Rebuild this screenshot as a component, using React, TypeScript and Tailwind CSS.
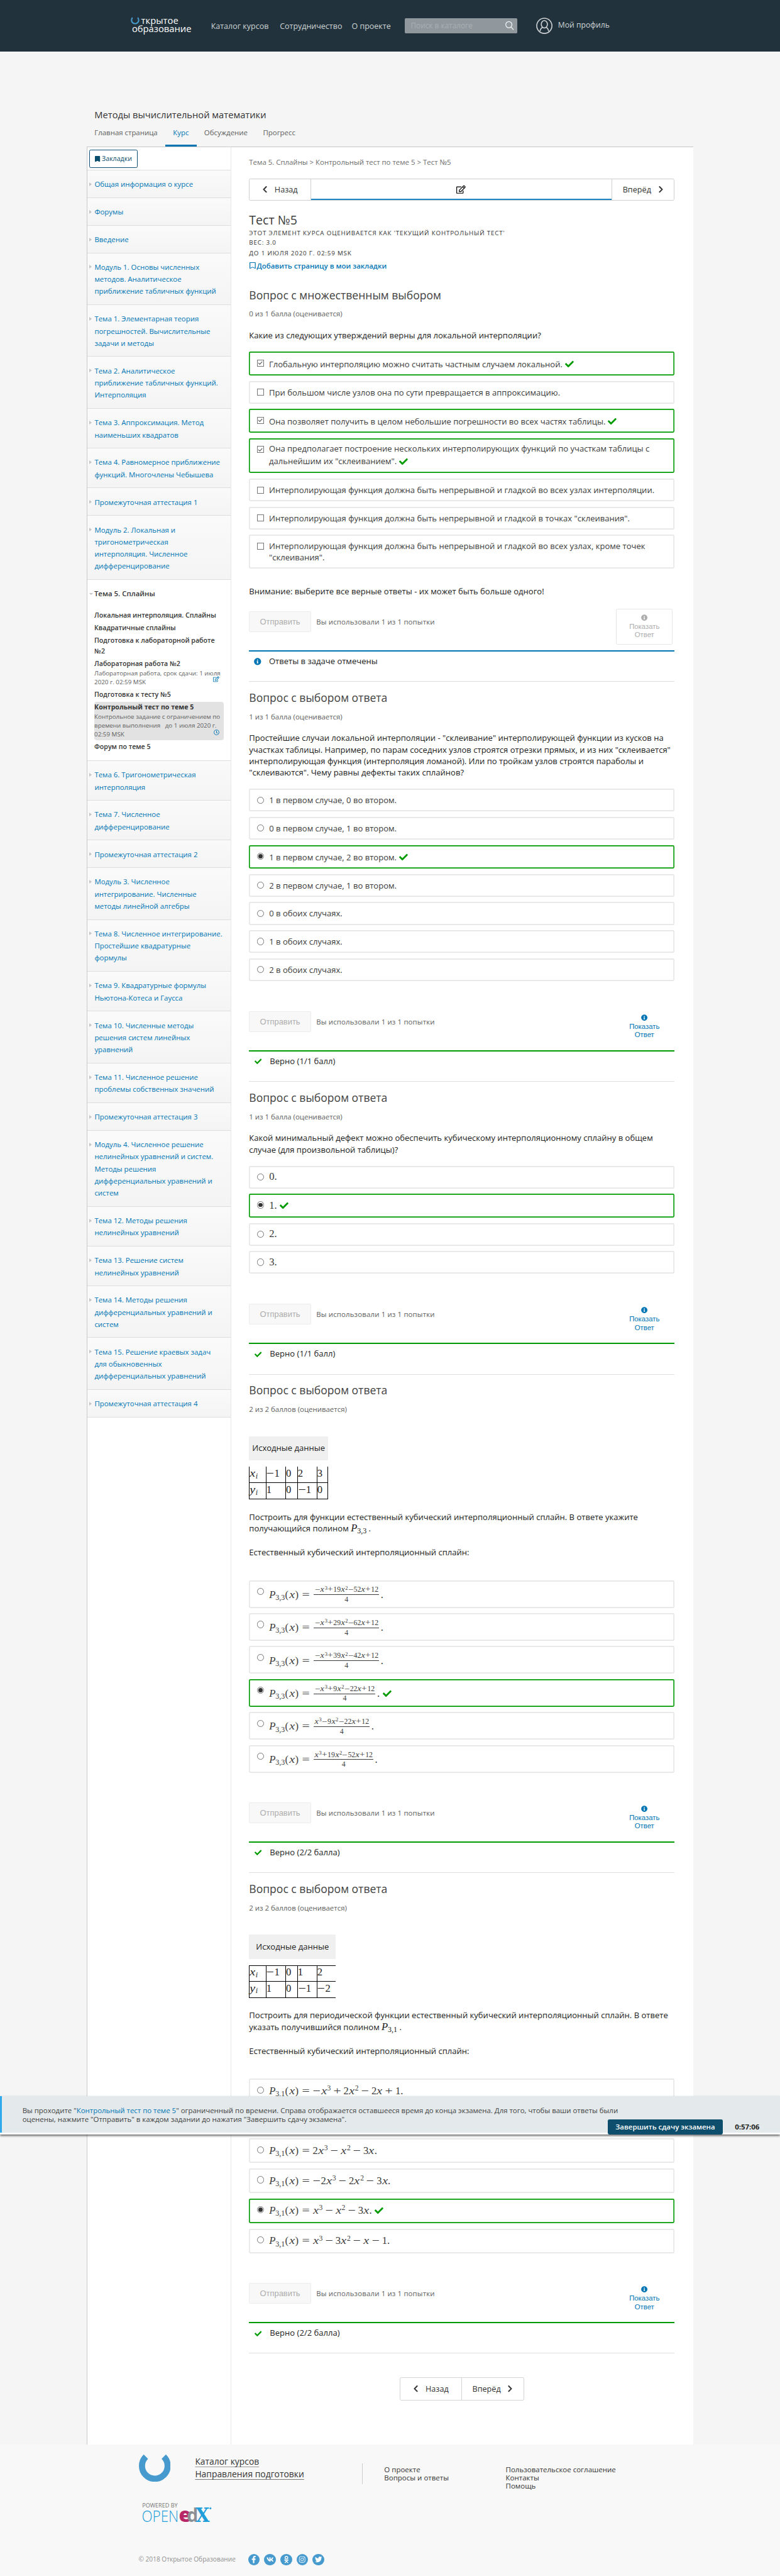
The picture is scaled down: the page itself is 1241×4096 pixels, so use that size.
import type { ReactNode } from "react";
import {
  FaBookmark,
  FaCheck,
  FaChevronLeft,
  FaChevronRight,
  FaFacebookF,
  FaInfoCircle,
  FaInstagram,
  FaOdnoklassniki,
  FaRegBookmark,
  FaRegClock,
  FaRegEdit,
  FaTwitter,
  FaVk,
} from "react-icons/fa";

/* ---------- formulas ---------- */

// Tokens: "^2" superscript, "_3,1" subscript (up to the next "("), operators get a wide box.
function Formula({ src }: { src: string }) {
  const out: ReactNode[] = [];
  const tokens = src.match(/\^\d|_[\d,i]+|[A-Za-z]|\d+|[−+=]|[().]/g) ?? [];
  tokens.forEach((t, i) => {
    const prev = tokens[i - 1];
    if (t[0] === "^")
      out.push(<span key={i} className="relative -top-[0.5em] ml-[0.05em] text-[0.7em] leading-none">{t.slice(1)}</span>);
    else if (t[0] === "_")
      out.push(
        <span key={i} className={t === "_i" ? "relative top-[0.22em] text-[0.72em] italic leading-none" : "relative top-[0.27em] text-[0.72em] leading-none"}>
          {t.slice(1)}
        </span>,
      );
    else if (t === "x" || t === "y")
      out.push(
        <span key={i} className="inline-block w-[0.56em] text-center italic">
          <span className="inline-block scale-x-[1.2]">{t}</span>
        </span>,
      );
    else if (t === "P") out.push(<span key={i} className="inline-block w-[0.6em] italic">P</span>);
    else if (t === "=") out.push(<span key={i} className="mx-[0.278em] inline-block w-[0.778em] text-center"><span className="inline-block scale-x-[1.3]">=</span></span>);
    else if (t === "−" || t === "+") {
      const unary = !prev || prev === "=";
      out.push(
        <span key={i} className={unary ? "inline-block w-[0.778em] text-center" : "mx-[0.222em] inline-block w-[0.778em] text-center"}>
          <span className="inline-block scale-x-[1.3]">{t}</span>
        </span>,
      );
    } else if (t === "(" || t === ")") out.push(<span key={i} className="inline-block w-[0.389em] text-center">{t}</span>);
    else out.push(<span key={i}>{t}</span>);
  });
  return <span className="whitespace-nowrap font-['Liberation_Serif',serif] text-[20.4px]">{out}</span>;
}

function Fraction({ num }: { num: string }) {
  return (
    <span className="flex h-[54px] items-center">
      <Formula src="P_3,3(x)=" />
      <span className="ml-[2px] flex flex-col items-center text-[14.5px]">
        <span className="flex h-[17px] items-center px-[1.5px]"><SmallFormula src={num} /></span>
        <span className="h-[1.3px] w-full bg-[#3c3c3c]" />
        <span className="flex h-[17px] items-center font-['Liberation_Serif',serif]">4</span>
      </span>
      <span className="ml-[3px] font-['Liberation_Serif',serif] text-[20.4px]">.</span>
    </span>
  );
}

function SmallFormula({ src }: { src: string }) {
  const tokens = src.match(/\^\d|x|\d+|[−+]/g) ?? [];
  return (
    <span className="whitespace-nowrap font-['Liberation_Serif',serif] leading-none">
      {tokens.map((t, i) =>
        t[0] === "^" ? (
          <span key={i} className="relative -top-[4.5px] ml-[0.5px] text-[10.4px]">{t.slice(1)}</span>
        ) : t === "x" ? (
          <span key={i} className="inline-block w-[8.2px] text-center italic"><span className="inline-block scale-x-[1.2]">x</span></span>
        ) : t === "−" || t === "+" ? (
          <span key={i} className="inline-block w-[11.3px] text-center"><span className="inline-block scale-x-[1.3]">{t}</span></span>
        ) : (
          <span key={i}>{t}</span>
        ),
      )}
    </span>
  );
}

/* ---------- sidebar ---------- */

const ITEM_HEIGHT: Record<number, string> = {
  1: "h-[53.75px]",
  2: "h-[77.35px]",
  3: "h-[100.95px]",
  4: "h-[124.55px]",
  5: "h-[148.15px]",
};

const BEFORE: string[][] = [
  ["Общая информация о курсе"],
  ["Форумы"],
  ["Введение"],
  ["Модуль 1. Основы численных", "методов. Аналитическое", "приближение табличных функций"],
  ["Тема 1. Элементарная теория", "погрешностей. Вычислительные", "задачи и методы"],
  ["Тема 2. Аналитическое", "приближение табличных функций.", "Интерполяция"],
  ["Тема 3. Аппроксимация. Метод", "наименьших квадратов"],
  ["Тема 4. Равномерное приближение", "функций. Многочлены Чебышева"],
  ["Промежуточная аттестация 1"],
  ["Модуль 2. Локальная и", "тригонометрическая", "интерполяция. Численное", "дифференцирование"],
];

const AFTER: string[][] = [
  ["Тема 6. Тригонометрическая", "интерполяция"],
  ["Тема 7. Численное", "дифференцирование"],
  ["Промежуточная аттестация 2"],
  ["Модуль 3. Численное", "интегрирование. Численные", "методы линейной алгебры"],
  ["Тема 8. Численное интегрирование.", "Простейшие квадратурные", "формулы"],
  ["Тема 9. Квадратурные формулы", "Ньютона-Котеса и Гаусса"],
  ["Тема 10. Численные методы", "решения систем линейных", "уравнений"],
  ["Тема 11. Численное решение", "проблемы собственных значений"],
  ["Промежуточная аттестация 3"],
  ["Модуль 4. Численное решение", "нелинейных уравнений и систем.", "Методы решения", "дифференциальных уравнений и", "систем"],
  ["Тема 12. Методы решения", "нелинейных уравнений"],
  ["Тема 13. Решение систем", "нелинейных уравнений"],
  ["Тема 14. Методы решения", "дифференциальных уравнений и", "систем"],
  ["Тема 15. Решение краевых задач", "для обыкновенных", "дифференциальных уравнений"],
  ["Промежуточная аттестация 4"],
];

function Lines({ lines }: { lines: string[] }) {
  return (
    <div className="whitespace-nowrap">
      {lines.map((l) => (
        <div key={l}>{l}</div>
      ))}
    </div>
  );
}

function SideItem({ lines }: { lines: string[] }) {
  return (
    <div className={`flex ${ITEM_HEIGHT[lines.length]} border-b border-[#dedede] bg-linear-to-b from-[#fafafa] to-[#f4f4f4] pt-[15.2px] pl-1 text-[14px] leading-[23.6px] text-[#0075b4]`}>
      <span className="mt-[8px] mr-[5px] h-0 w-0 border-y-[4px] border-l-[5px] border-y-transparent border-l-[#c4c4c4]" />
      <Lines lines={lines} />
    </div>
  );
}

function Sidebar() {
  return (
    <aside className="w-[280px] shrink-0 border-r border-[#e7e7e7]">
      <div className="h-[45.4px] border-b border-[#dedede] pt-[5px] pl-1">
        <button className="flex h-[36px] w-[94px] items-center justify-center gap-[3px] rounded-[3px] border border-[#0a5070] text-[13px] text-[#0a4d6c]">
          <FaBookmark className="h-[12px] w-[10px]" preserveAspectRatio="none" />
          Закладки
        </button>
      </div>
      {BEFORE.map((l) => (
        <SideItem key={l[0]} lines={l} />
      ))}
      <div className="h-[352.6px] border-b border-[#dedede] pt-[15.5px] pl-1 text-[#333]">
        <div className="flex text-[14px] leading-[23.6px] font-semibold">
          <span className="mt-[11px] mr-[2px] h-0 w-0 border-x-[4px] border-t-[4px] border-x-transparent border-t-[#c4c4c4]" />
          Тема 5. Сплайны
        </div>
        <div className="ml-[9.5px] w-[252px] whitespace-nowrap text-[13px] font-semibold">
          <div className="mt-[19.5px] h-[24.7px] leading-[21px]">Локальная интерполяция. Сплайны</div>
          <div className="h-[25px] leading-[21px]">Квадратичные сплайны</div>
          <div className="h-[45px] leading-[21px]">Подготовка к лабораторной работе<br />№2</div>
          <div className="relative h-[60.5px] leading-[21px]">
            Лабораторная работа №2
            <div className="text-[12px] leading-[17.3px] font-normal text-[#616161]">Лабораторная работа, срок сдачи: 1 июля<br />2020 г. 02:59 MSK</div>
            <FaRegEdit className="absolute top-[34px] right-[9px] size-[12px] text-[#0075b4]" />
          </div>
          <div className="h-[24.5px] leading-[21px]">Подготовка к тесту №5</div>
          <div className="relative h-[74px] rounded-[5px] bg-[#e2e2e2] text-[13px] leading-[20px] font-bold">
            Контрольный тест по теме 5
            <div className="text-[12px] leading-[17.4px] font-normal text-[#616161]">
              Контрольное задание с ограничением по<br />времени выполнения &nbsp; до 1 июля 2020 г.<br />02:59 MSK
            </div>
            <FaRegClock className="absolute right-[8px] bottom-[10px] size-[11px] text-[#0075b4]" />
          </div>
          <div className="mt-[3px] leading-[21px]">Форум по теме 5</div>
        </div>
      </div>
      {AFTER.map((l) => (
        <SideItem key={l[0]} lines={l} />
      ))}
    </aside>
  );
}

/* ---------- problems ---------- */

type Option = { body: ReactNode; h: string; pt: string; on?: boolean; lh?: string; check?: string };

const H1 = "h-[44.2px]";
const HG = "h-[46.4px]";
const text = (s: string, on = false): Option => ({ body: s, h: on ? HG : H1, pt: on ? "pt-[12.6px]" : "pt-[11px]", on });
const digit = (s: string, on = false): Option => ({ body: <Formula src={s} />, h: on ? HG : H1, pt: on ? "pt-[12.3px]" : "pt-[10.7px]", on });
const fraction = (s: string, on = false): Option => ({ body: <Fraction num={s} />, h: "h-[53.7px]", pt: "pt-[1.4px]", on });
const poly = (s: string, on = false): Option => ({ body: <Formula src={"P_3,1(x)=" + s + "."} />, h: on ? "h-[48.5px]" : "h-[47.7px]", pt: "pt-[12.8px]", on });

function Control({ kind, on }: { kind: "radio" | "checkbox"; on?: boolean }) {
  if (kind === "radio")
    return (
      <span className="mt-[15px] ml-[15px] flex size-[13.8px] shrink-0 items-center justify-center rounded-full border border-[#767676] bg-white">
        {on && <span className="size-[8.4px] rounded-full bg-[#333]" />}
      </span>
    );
  return (
    <span className="mt-[15.5px] ml-[15px] flex size-[13.6px] shrink-0 items-center justify-center border border-[#767676] bg-white">
      {on && (
        <svg viewBox="0 0 10 10" className="size-[10px]" fill="none" stroke="#555" strokeWidth="1.3">
          <path d="M1.2 4.8 4 7.6 9 2.2" />
        </svg>
      )}
    </span>
  );
}

function Options({ kind, items, gap }: { kind: "radio" | "checkbox"; items: Option[]; gap: string }) {
  return (
    <div className={`flex flex-col ${gap}`}>
      {items.map((o, i) => (
        <label
          key={i}
          className={`flex ${o.h} rounded-[3px] text-[16px] text-[#3c3c3c] ${o.on ? "shadow-[inset_0_0_0_2px_#009b00]" : "shadow-[inset_0_0_0_2px_#e6e6e6]"}`}
        >
          <Control kind={kind} on={o.on} />
          <span className={`ml-[10.2px] flex items-start whitespace-nowrap ${o.pt} ${o.lh ?? "leading-[22.4px]"}`}>
            {o.body}
            {o.on && !o.check && <FaCheck className={o.h === "h-[53.7px]" ? "mt-[18px] ml-[6px] size-[17px] text-[#009b00]" : "mt-[2.5px] ml-[5px] size-[17px] text-[#009b00]"} />}
          </span>
        </label>
      ))}
    </div>
  );
}

function Heading({ title, score, first = false }: { title: string; score: string; first?: boolean }) {
  return (
    <>
      <h3 className={`h-[30px] text-[21.5px] leading-[30px] text-[#414141] ${first ? "mt-[32.2px]" : "mt-[15.4px]"}`}>{title}</h3>
      <div className="mt-[12.7px] h-5 text-[14px] leading-5 text-[#5e5e5e]">{score}</div>
    </>
  );
}

function Actions({ mt, status, answered = true }: { mt: string; status: string; answered?: boolean }) {
  return (
    <div className={`${mt} flex h-[137.4px] flex-col border-b border-[#dfdfdf]`}>
      <div className="flex h-[75.4px] justify-between">
        <div className="flex h-[40px] items-center">
          <button className="h-[40px] w-[120.5px] rounded-[2px] border border-[#ececec] bg-[#f8f8f8] font-['Liberation_Sans'] text-[15.85px] text-[#adadad]">Отправить</button>
          <span className="ml-[10.5px] pt-px text-[14px] tracking-[0.17px] text-[#5e5e5e]">Вы использовали 1 из 1 попытки</span>
        </div>
        <button
          className={`mt-[-5.5px] mr-[4px] flex h-[70.5px] w-[110px] flex-col items-center rounded-[3px] border pt-[10.5px] font-['Liberation_Sans'] text-[13.9px] leading-[16.6px] ${
            answered ? "border-transparent text-[#0075b4]" : "border-[#e6e6e6] text-[#adadad]"
          }`}
        >
          <FaInfoCircle className="mb-[3px] size-[12.5px] shrink-0" />
          Показать<br />Ответ
        </button>
      </div>
      <div className={`h-[2.5px] ${answered ? "bg-[#009b00]" : "bg-[#0075b4]"}`} />
      <div className="flex h-[40px] items-center text-[16px] text-[#222]">
        {answered ? <FaCheck className="ml-[10.5px] size-[14px] text-[#009b00]" /> : <FaInfoCircle className="ml-[9.5px] size-[14.2px] text-[#0075b4]" />}
        <span className={answered ? "ml-[16px]" : "ml-[15px]"}>{status}</span>
      </div>
    </div>
  );
}

function DataTable({ rows, open = false }: { rows: string[][]; open?: boolean }) {
  return (
    <div className={open ? "w-[169px]" : "w-[154px]"}>
      <div className="flex h-[47px] items-center justify-center bg-[#f0f0f0] text-[16px] text-[#222]">Исходные данные</div>
      <div className={`mt-[12.3px] flex h-[63.3px] flex-col border-b border-l border-black ${open ? "border-t" : "border-r"}`}>
        {rows.map((r, i) => (
          <div
            key={i}
            className={`grid min-h-0 flex-1 grid-cols-[31px_38.4px_23px_37.8px_1fr] text-[#222] ${i ? "border-t border-black" : ""}`}
          >
            {r.map((c, j) => (
              <div key={j} className={`flex items-center pb-[3px] leading-none ${j ? "border-l border-black" : ""}`}>
                <Formula src={c} />
              </div>
            ))}
          </div>
        ))}
      </div>
    </div>
  );
}

function Task({ children }: { children: ReactNode }) {
  return <p className="text-[16px] leading-[22.4px] whitespace-nowrap text-[#222]">{children}</p>;
}

function Poly({ src }: { src: string }) {
  return <span className="inline-block h-[22.4px] align-top leading-[21px]"><Formula src={src} /></span>;
}

function Main() {
  return (
    <main className="w-[864px] pl-[35px] [&>*]:w-[829px]">
      <div className="mt-[20.2px] h-5 text-[14px] leading-5 text-[#6d6d6d]">Тема 5. Сплайны &gt; Контрольный тест по теме 5 &gt; Тест №5</div>

      <div className="mt-[20.8px] flex h-[43.7px] rounded-[3px] border border-[#cfcfcf] text-[15.5px] text-[#333]">
        <button className="flex w-[119px] items-center justify-center gap-[13px] border-r border-[#cfcfcf]"><FaChevronLeft className="h-[15px] w-[11px]" />Назад</button>
        <div className="flex flex-1 items-center justify-center border-b-3 border-[#1f85c4] pt-[3px]">
          <FaRegEdit className="size-[18px] text-black" />
        </div>
        <button className="flex w-[122px] items-center justify-center gap-[13px] border-l border-[#cfcfcf]">Вперёд<FaChevronRight className="h-[15px] w-[11px]" /></button>
      </div>

      <h2 className="mt-[23px] h-[30px] text-[24px] leading-[30px] font-medium text-[#3c3c3c]">Тест №5</h2>
      <div className="mt-[1.6px] h-[18.2px] text-[12px] leading-[18px] font-medium tracking-[1px] text-[#333]">ЭТОТ ЭЛЕМЕНТ КУРСА ОЦЕНИВАЕТСЯ КАК 'ТЕКУЩИЙ КОНТРОЛЬНЫЙ ТЕСТ'</div>
      <div className="h-[18px] text-[12px] leading-[18px] font-medium tracking-[1px] text-[#333]">ВЕС: 3.0</div>
      <div className="mt-[3px] h-[18px] text-[12px] leading-[18px] font-medium tracking-[1px] text-[#333]">ДО 1 ИЮЛЯ 2020 Г. 02:59 MSK</div>
      <div className="mt-[4.2px] flex h-5 items-center gap-[2px] text-[14px] font-semibold text-[#0075b4]">
        <FaRegBookmark className="ml-px h-[13px] w-[12px]" preserveAspectRatio="none" />
        Добавить страницу в мои закладки
      </div>

      <Heading first title="Вопрос с множественным выбором" score="0 из 1 балла (оценивается)" />
      <div className="mt-[19.9px] mb-[20.9px]">
        <Task>Какие из следующих утверждений верны для локальной интерполяции?</Task>
      </div>
      <Options
        kind="checkbox"
        gap="gap-[10.4px]"
        items={[
          text("Глобальную интерполяцию можно считать частным случаем локальной.", true),
          text("При большом числе узлов она по сути превращается в аппроксимацию."),
          text("Она позволяет получить в целом небольшие погрешности во всех частях таблицы.", true),
          {
            h: "h-[68.3px]",
            pt: "pt-[9.2px]",
            lh: "leading-[24px]",
            on: true,
            check: "inline",
            body: (
              <span>
                Она предполагает построение нескольких интерполирующих функций по участкам таблицы с<br />
                дальнейшим их "склеиванием". <FaCheck className="relative -top-px inline size-[17px] text-[#009b00]" />
              </span>
            ),
          },
          text("Интерполирующая функция должна быть непрерывной и гладкой во всех узлах интерполяции."),
          text('Интерполирующая функция должна быть непрерывной и гладкой в точках "склеивания".'),
          {
            h: "h-[65.5px]",
            pt: "pt-[10.8px]",
            body: (
              <span>
                Интерполирующая функция должна быть непрерывной и гладкой во всех узлах, кроме точек<br />
                "склеивания".
              </span>
            ),
          },
        ]}
      />
      <div className="mt-[33px]">
        <Task>Внимание: выберите все верные ответы - их может быть больше одного!</Task>
      </div>
      <Actions mt="mt-[28.6px]" status="Ответы в задаче отмечены" answered={false} />

      <Heading title="Вопрос с выбором ответа" score="1 из 1 балла (оценивается)" />
      <div className="mt-[19.9px] mb-[20.5px]">
        <Task>
          Простейшие случаи локальной интерполяции - "склеивание" интерполирующей функции из кусков на<br />
          участках таблицы. Например, по парам соседних узлов строятся отрезки прямых, и из них "склеивается"<br />
          интерполирующая функция (интерполяция ломаной). Или по тройкам узлов строятся параболы и<br />
          "склеиваются". Чему равны дефекты таких сплайнов?
        </Task>
      </div>
      <Options
        kind="radio"
        gap="gap-[10.4px]"
        items={[
          text("1 в первом случае, 0 во втором."),
          text("0 в первом случае, 1 во втором."),
          text("1 в первом случае, 2 во втором.", true),
          text("2 в первом случае, 1 во втором."),
          text("0 в обоих случаях."),
          text("1 в обоих случаях."),
          text("2 в обоих случаях."),
        ]}
      />
      <Actions mt="mt-[59.1px]" status="Верно (1/1 балл)" />

      <Heading title="Вопрос с выбором ответа" score="1 из 1 балла (оценивается)" />
      <div className="mt-[19.9px] mb-[20.5px]">
        <Task>
          Какой минимальный дефект можно обеспечить кубическому интерполяционному сплайну в общем<br />
          случае (для произвольной таблицы)?
        </Task>
      </div>
      <Options kind="radio" gap="gap-[10.4px]" items={[digit("0."), digit("1.", true), digit("2."), digit("3.")]} />
      <Actions mt="mt-[58.9px]" status="Верно (1/1 балл)" />

      <Heading title="Вопрос с выбором ответа" score="2 из 2 баллов (оценивается)" />
      <div className="mt-[42.2px]">
        <DataTable rows={[["x_i", "−1", "0", "2", "3"], ["y_i", "1", "0", "−1", "0"]]} />
      </div>
      <div className="mt-[22.9px]">
        <Task>
          Построить для функции естественный кубический интерполяционный сплайн. В ответе укажите<br />
          получающийся полином <Poly src="P_3,3" />&nbsp;.
        </Task>
      </div>
      <div className="mt-[24px] mb-[43.6px]">
        <Task>Естественный кубический интерполяционный сплайн:</Task>
      </div>
      <Options
        kind="radio"
        gap="gap-[10.5px]"
        items={[
          fraction("−x^3+19x^2−52x+12"),
          fraction("−x^3+29x^2−62x+12"),
          fraction("−x^3+39x^2−42x+12"),
          fraction("−x^3+9x^2−22x+12", true),
          fraction("x^3−9x^2−22x+12"),
          fraction("x^3+19x^2−52x+12"),
        ]}
      />
      <Actions mt="mt-[58px]" status="Верно (2/2 балла)" />

      <Heading title="Вопрос с выбором ответа" score="2 из 2 баллов (оценивается)" />
      <div className="mt-[42.2px]">
        <DataTable open rows={[["x_i", "−1", "0", "1", "2"], ["y_i", "1", "0", "−1", "−2"]]} />
      </div>
      <div className="mt-[22.9px]">
        <Task>
          Построить для периодической функции естественный кубический интерполяционный сплайн. В ответе<br />
          указать получившийся полином <Poly src="P_3,1" />&nbsp;.
        </Task>
      </div>
      <div className="mt-[24.4px] mb-[43.1px]">
        <Task>Естественный кубический интерполяционный сплайн:</Task>
      </div>
      <Options
        kind="radio"
        gap="gap-[10.6px]"
        items={[
          poly("−x^3+2x^2−2x+1"),
          poly("x^3−2x^2−3x"),
          poly("2x^3−x^2−3x"),
          poly("−2x^3−2x^2−3x"),
          poly("x^3−x^2−3x", true),
          poly("x^3−3x^2−x−1"),
        ]}
      />
      <Actions mt="mt-[58px]" status="Верно (2/2 балла)" />

      <div className="mt-[45.9px] flex justify-center text-[15.5px] text-[#333]">
        <div className="flex h-[45px] w-[242px] rounded-[3px] border border-[#d4d4d4]">
          <button className="flex w-[120px] items-center justify-center gap-[13px] border-r border-[#d4d4d4]"><FaChevronLeft className="h-[15px] w-[11px]" />Назад</button>
          <button className="flex flex-1 items-center justify-center gap-[13px]">Вперёд<FaChevronRight className="h-[15px] w-[11px]" /></button>
        </div>
      </div>
    </main>
  );
}

/* ---------- page chrome ---------- */

function Header() {
  return (
    <header className="flex h-[100px] bg-[#21323c] pl-[255px] text-[#ced2d5]">
      <div className="mt-[31.8px] w-[120px] text-[18.1px] leading-[16.4px] font-medium text-white">
        <div className="flex">
          <svg viewBox="0 0 17 15" className="mt-[1.5px] mr-[3px] h-[15px] w-[17px]" fill="none" stroke="#479ccf" strokeWidth="2.6">
            <path d="M3.4 1.1A7 7 0 1 0 13.6 1.1" />
          </svg>
          ткрытое
        </div>
        <div className="pl-[2px]">образование</div>
      </div>
      <nav className="mt-[40px] ml-[36px] flex gap-[20px] text-[15.3px] leading-[22px]">
        <span className="w-[114px] whitespace-nowrap">Каталог курсов</span>
        <span className="w-[120px] whitespace-nowrap">Сотрудничество</span>
        <span>О проекте</span>
      </nav>
      <div className="mt-[35px] ml-auto flex h-[30px] w-[219px] items-center justify-between rounded-[2px] bg-[#90989d] pr-[5px] pl-[12px] text-[14.5px] text-[#a9b0b4]">
        Поиск в каталоге
        <svg viewBox="0 0 20 20" className="size-[19px]" fill="none" stroke="#f2f4f5" strokeWidth="1.7">
          <circle cx="8.5" cy="8" r="6.3" />
          <path d="M13 12.8 18 18.4" />
        </svg>
      </div>
      <div className="mt-[34px] mr-[332px] ml-[37px] flex h-[32px] items-center gap-[11px] text-[14.9px] whitespace-nowrap">
        <svg viewBox="0 0 32 32" className="size-[32px]" fill="none" stroke="#ced2d5" strokeWidth="2">
          <circle cx="16" cy="16" r="14.8" />
          <ellipse cx="16" cy="13" rx="6" ry="7.2" />
          <path d="M7.6 26.6c.6-3.8 2.6-6.6 5-7.6M24.4 26.6c-.6-3.8-2.6-6.6-5-7.6" />
        </svg>
        <span className="-mt-[2px]">Мой профиль</span>
      </div>
    </header>
  );
}

function CourseTabs() {
  return (
    <div className="pt-[110.5px] pl-[169px]">
      <h1 className="h-[26px] pl-[15px] text-[18px] leading-[26px] font-medium text-[#333]">Методы вычислительной математики</h1>
      <div className="flex h-[48.5px] text-[14px] leading-5 text-[#5e5e5e] [&>*]:px-[15px] [&>*]:pt-[12.6px]">
        <span>Главная страница</span>
        <span className="border-b-4 border-[#0075b4] text-[#0075b4]">Курс</span>
        <span>Обсуждение</span>
        <span>Прогресс</span>
      </div>
    </div>
  );
}

function TimerBar() {
  return (
    <div className="absolute top-[4080px] left-0 h-[75px] w-full bg-white/80 shadow-[0_2px_4px_rgba(0,0,0,0.6)]">
      <div className="h-[72px] border-l-[4px] border-[#2fa8ec] bg-[#e4eaec] pt-[20.6px] pl-[40px] text-[14px] leading-[16.4px] whitespace-nowrap text-[#414141]">
        Вы проходите "<span className="text-[#0075b4]">Контрольный тест по теме 5</span>" ограниченный по времени. Справа отображается оставшееся время до конца экзамена. Для того, чтобы ваши ответы были
        <br />
        оценены, нажмите "Отправить" в каждом задании до нажатия "Завершить сдачу экзамена".
      </div>
      <div className="absolute right-[40px] bottom-0 flex h-[29px] items-center gap-[23.5px] text-[14px]">
        <button className="h-[29px] w-[224px] rounded-[3px] bg-[#0d4e6c] font-semibold text-white">Завершить сдачу экзамена</button>
        <span className="w-[48px] font-bold text-[#222]">0:57:06</span>
      </div>
    </div>
  );
}

function Footer() {
  const social = [FaFacebookF, FaVk, FaOdnoklassniki, FaInstagram, FaTwitter];
  return (
    <footer className="h-[256px] bg-[#f8f8f8] pl-[270px] text-[#333]">
      <div className="flex h-[100px]">
        <svg viewBox="0 0 62 52" className="mt-[20px] h-[52px] w-[62px]" fill="none" stroke="#479ace" strokeWidth="12">
          <path d="M13.6 4A25 25 0 1 0 48.4 4" />
        </svg>
        <div className="mt-[21px] ml-[48px] w-[325px] text-[17px] leading-[24.6px]">
          <div className="underline decoration-[#999] decoration-1 underline-offset-[4px]">Каталог курсов</div>
          <div className="underline decoration-[#777] decoration-1 underline-offset-[4px]">Направления подготовки</div>
        </div>
        <div className="mt-[36px] h-[41px] w-px bg-[#ccc]" />
        <div className="mt-[40.6px] ml-[42.5px] w-[236.5px] text-[14.1px] leading-[15.9px]">О проекте<br />Вопросы и ответы</div>
        <div className="mt-[40.6px] text-[14.1px] leading-[15.9px]">Пользовательское соглашение<br />Контакты<br />Помощь</div>
      </div>
      <svg viewBox="0 0 142 54" className="mt-[5px] ml-[6px] h-[54px] w-[142px] overflow-visible" fontFamily="Open Sans">
        <text x="1.5" y="17" fontSize="11" fill="#777" textLength="69" lengthAdjust="spacingAndGlyphs">POWERED BY</text>
        <text x="0.5" y="45" fontSize="30.5" fontWeight="300" fill="#1f9ed9" textLength="72" lengthAdjust="spacingAndGlyphs">OPEN</text>
        <text x="73" y="45" fontSize="39" fontWeight="800" fill="#b72667">e</text>
        <text x="88.5" y="45" fontSize="38" fontWeight="700" fill="#8b8f94" textLength="22" lengthAdjust="spacingAndGlyphs">d</text>
        <text x="105.5" y="45" fontSize="39" fontWeight="700" fill="#1f9ed9" fontFamily="DejaVu Serif" textLength="27" lengthAdjust="spacingAndGlyphs">X</text>
        <circle cx="134.5" cy="19" r="1.8" fill="#1f9ed9" />
      </svg>
      <div className="mt-[53px] flex h-[24px] items-center text-[12.38px] text-[#919191]">
        <span className="w-[213px]">© 2018 Открытое Образование</span>
        <div className="flex gap-[8.5px]">
          {social.map((Icon, i) => (
            <span key={i} className="flex size-[23px] items-center justify-center rounded-full bg-[#479ace] text-white">
              <Icon className="size-[14px]" />
            </span>
          ))}
        </div>
      </div>
    </footer>
  );
}

export default function App() {
  return (
    <div className="relative h-[5014.7px] w-full overflow-hidden bg-[#f5f5f5] font-['Open_Sans',sans-serif] [zoom:0.8168]">
      <Header />
      <CourseTabs />
      <div className="ml-[169px] flex h-[4474px] w-[1181px] border-t border-l border-[#c8c8c8] bg-white">
        <Sidebar />
        <Main />
      </div>
      <Footer />
      <TimerBar />
    </div>
  );
}
